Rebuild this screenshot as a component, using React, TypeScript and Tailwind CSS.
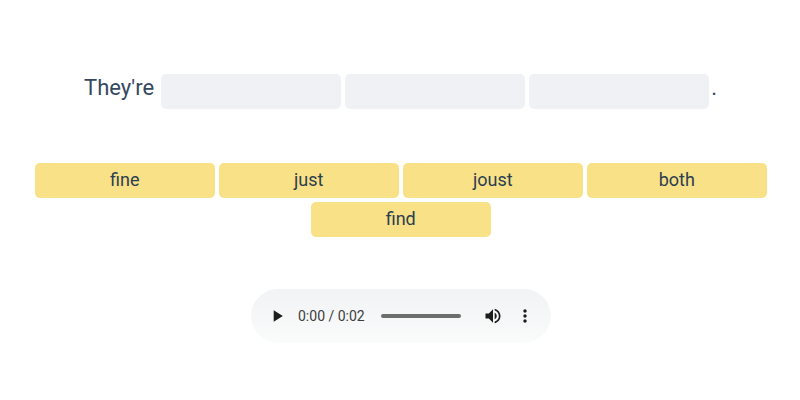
const App = () => {
	const words = ["fine", "just", "joust", "both", "find"];

	return (
		<main className="h-[400px] w-[800px] bg-white pt-[74px] font-['Roboto',sans-serif] text-[#34495e]">
			<div className="flex h-[35px] justify-center gap-1 text-[22px] leading-[28px]">
				<span className="mr-[3px]">They're</span>
				{[0, 1, 2].map((slot) => (
					<div
						key={slot}
						className="w-[180px] rounded-[5px] bg-[#f0f1f5]"
					></div>
				))}
				<span className="-ml-[2px] -mr-px">.</span>
			</div>
			<ul className="mx-auto mt-[54px] flex w-[734px] flex-wrap justify-center gap-1 pl-[2px] text-[#2c3e50]">
				{words.map((word) => (
					<li
						key={word}
						className="h-[35px] w-[180px] rounded-[5px] bg-[#f8e187] pr-[0.5px] text-center text-lg leading-[34px]"
					>
						{word}
					</li>
				))}
			</ul>
			<div className="ml-[251px] mt-[52px] flex h-[54px] w-[300px] items-center rounded-full bg-gradient-to-b from-[#f1f3f4] to-[#fafbfb] text-[#1b1c1c]">
				<svg
					className="ml-4 h-5 w-5"
					viewBox="0 0 24 24"
					fill="currentColor"
				>
					<path d="M8 5v14l11-7z" />
				</svg>
				<span className="ml-[11px] w-[83px] text-sm text-[#3c3d3e]">
					0:00 / 0:02
				</span>
				<div className="h-1 w-20 rounded-full bg-[#6c6d6d]"></div>
				<svg
					className="ml-[22px] h-5 w-5"
					viewBox="0 0 24 24"
					fill="currentColor"
				>
					<path d="M3 9v6h4l5 5V4L7 9H3zm13.5 3c0-1.77-1.02-3.29-2.5-4.03v8.05c1.48-.73 2.5-2.25 2.5-4.02zM14 3.23v2.06c2.89.86 5 3.54 5 6.71s-2.11 5.85-5 6.71v2.06c4.01-.91 7-4.49 7-8.77s-2.99-7.86-7-8.77z" />
				</svg>
				<svg
					className="ml-3 h-5 w-5"
					viewBox="0 0 24 24"
					fill="currentColor"
				>
					<path d="M12 8c1.1 0 2-.9 2-2s-.9-2-2-2-2 .9-2 2 .9 2 2 2zm0 2c-1.1 0-2 .9-2 2s.9 2 2 2 2-.9 2-2-.9-2-2-2zm0 6c-1.1 0-2 .9-2 2s.9 2 2 2 2-.9 2-2-.9-2-2-2z" />
				</svg>
			</div>
		</main>
	);
};

export default App;
